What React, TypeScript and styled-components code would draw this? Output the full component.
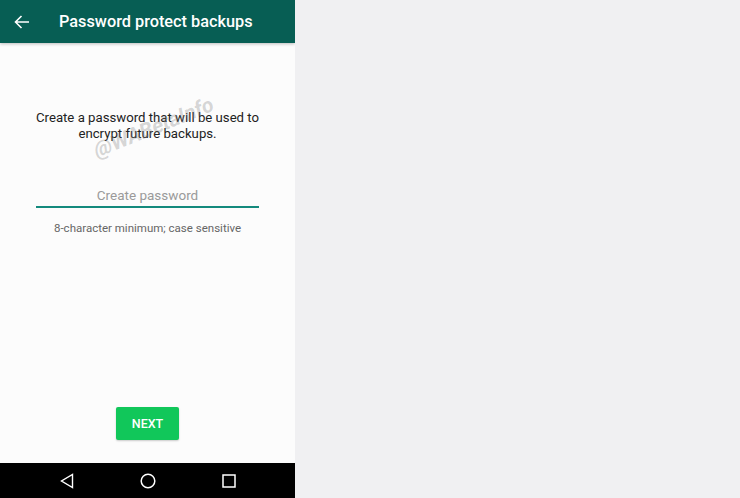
import React from "react";
import styled, { createGlobalStyle } from "styled-components";

const GlobalStyle = createGlobalStyle`
    html, body {
        margin: 0;
        padding: 0;
        background: #f0f0f2;
        font-family: Roboto, "Liberation Sans", sans-serif;
    }
`;

const StyledPage = styled.div`
    display: flex;
    width: 740px;
    height: 498px;
    background: #f0f0f2;
`;

const StyledPhone = styled.div`
    position: relative;
    display: flex;
    flex-direction: column;
    width: 295px;
    height: 498px;
    background: #fcfcfc;
    overflow: hidden;
`;

const StyledAppBar = styled.header`
    display: flex;
    align-items: center;
    height: 43px;
    padding: 0 14px;
    gap: 29px;
    background: #075e54;
    color: #fff;
    box-shadow: 0 1px 3px rgba(0, 0, 0, 0.25);
    z-index: 1;

    h1 {
        margin: 0;
        font-size: 16.3px;
        font-weight: 500;
    }
`;

const StyledContent = styled.main`
    flex: 1;
    display: flex;
    flex-direction: column;
    align-items: center;
    padding: 67px 36px 0 36px;
`;

const StyledIntro = styled.p`
    margin: 0;
    font-size: 13.2px;
    line-height: 15.5px;
    color: #222;
    text-align: center;
    white-space: nowrap;
`;

const StyledField = styled.div`
    align-self: stretch;
    margin-top: 46px;
    padding-bottom: 3px;
    border-bottom: 2px solid #148a7d;
    text-align: center;
    font-size: 13.5px;
    color: #9a9a9a;
`;

const StyledHint = styled.p`
    margin: 13px 0 0 0;
    font-size: 11.5px;
    color: #666;
`;

const StyledButton = styled.button`
    margin-top: auto;
    margin-bottom: 23px;
    width: 63px;
    height: 33px;
    border: none;
    border-radius: 2px;
    background: #11c75a;
    color: #fff;
    font-family: inherit;
    font-size: 12.5px;
    font-weight: 500;
    box-shadow: 0 1px 2px rgba(0, 0, 0, 0.2);
`;

const StyledNavBar = styled.nav`
    display: flex;
    align-items: center;
    justify-content: center;
    gap: 66px;
    height: 35px;
    background: #000;
`;

const StyledWatermark = styled.span`
    position: absolute;
    left: 90px;
    top: 140px;
    transform: rotate(-22deg);
    transform-origin: left top;
    font-size: 21px;
    font-weight: 700;
    font-style: italic;
    color: rgba(120, 120, 120, 0.3);
    pointer-events: none;
`;

const App: React.FC = (): React.ReactElement => (
    <>
        <GlobalStyle />
        <StyledPage>
            <StyledPhone>
                <StyledAppBar>
                    <svg width="16" height="16" viewBox="0 0 16 16" fill="none" stroke="#fff" strokeWidth="1.6">
                        <path d="M15 8H1.5M7.5 2L1.5 8l6 6" />
                    </svg>
                    <h1>Password protect backups</h1>
                </StyledAppBar>
                <StyledContent>
                    <StyledIntro>
                        Create a password that will be used to
                        <br />
                        encrypt future backups.
                    </StyledIntro>
                    <StyledField>Create password</StyledField>
                    <StyledHint>8-character minimum; case sensitive</StyledHint>
                    <StyledButton>NEXT</StyledButton>
                </StyledContent>
                <StyledNavBar>
                    <svg width="14" height="16" viewBox="0 0 14 16" fill="none" stroke="#fff" strokeWidth="1.4">
                        <path d="M12.5 1.5v13L1.5 8z" />
                    </svg>
                    <svg width="16" height="16" viewBox="0 0 16 16" fill="none" stroke="#fff" strokeWidth="1.5">
                        <circle cx="8" cy="8" r="6.8" />
                    </svg>
                    <svg width="14" height="14" viewBox="0 0 14 14" fill="none" stroke="#fff" strokeWidth="1.5">
                        <rect x="1" y="1" width="12" height="12" />
                    </svg>
                </StyledNavBar>
                <StyledWatermark>@WABetaInfo</StyledWatermark>
            </StyledPhone>
        </StyledPage>
    </>
);

export default App;
